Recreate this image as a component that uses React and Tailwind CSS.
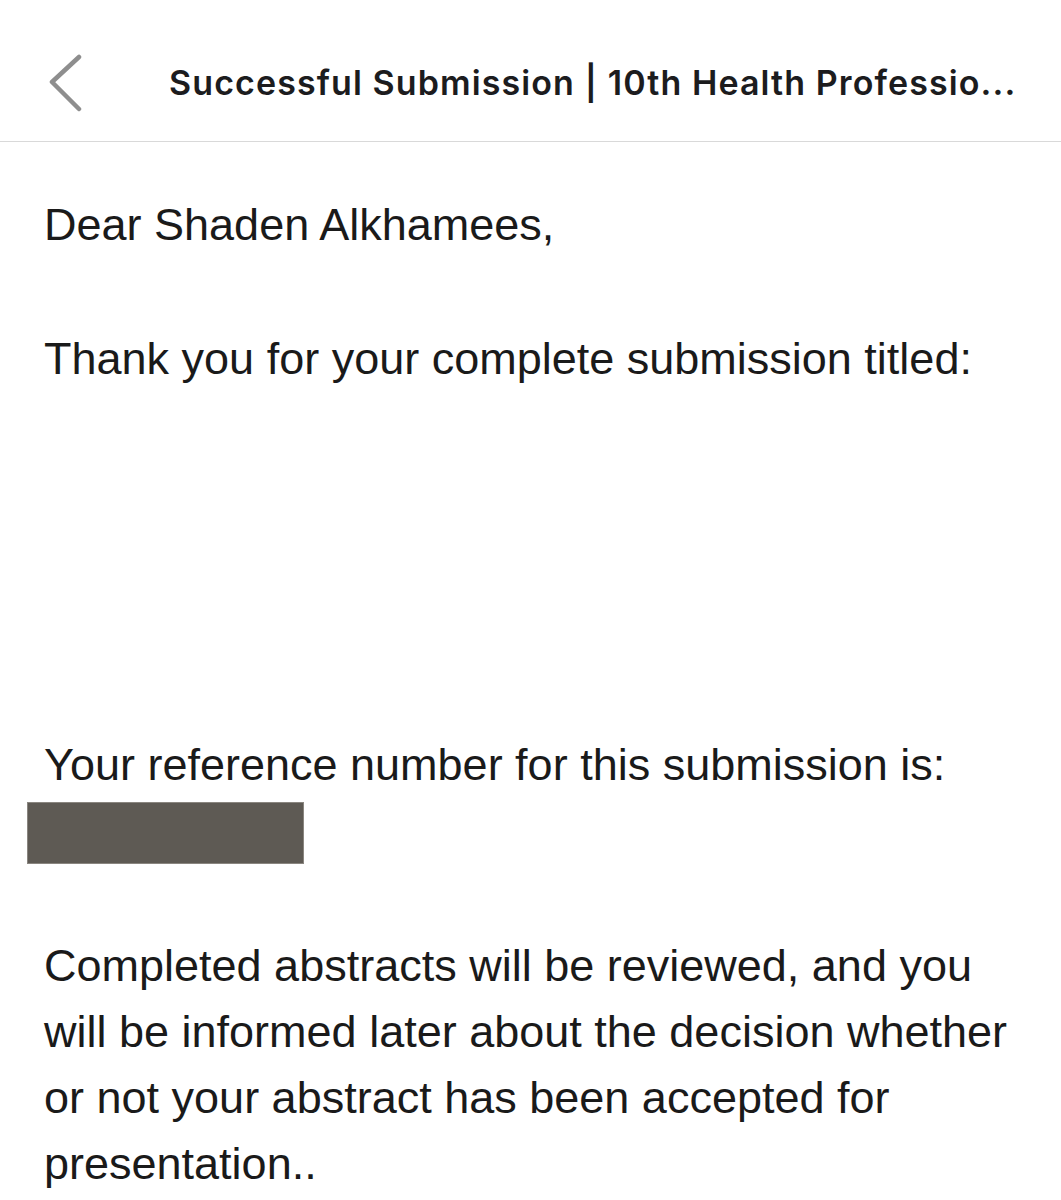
export default function App() {
  return (
    <div className="min-h-[1200px] w-[1061px] bg-white overflow-hidden">
      {/* header */}
      <div className="h-[142px] border-b border-[#d9d9d9] flex items-center pt-[24px]">
        <div className="w-[169px] shrink-0 pl-[48px] flex items-center">
          <svg width="36" height="58" viewBox="0 0 36 58" fill="none">
            <polyline
              points="31,3 4,28 31,55"
              stroke="#8e8e8e"
              strokeWidth="4.5"
              strokeLinecap="round"
              strokeLinejoin="round"
            />
          </svg>
        </div>
        <h1
          className="text-[34px] font-semibold text-[#1c1c1e] whitespace-nowrap tracking-[1.1px]"
          style={{ fontFamily: "Inter, 'Noto Sans', sans-serif" }}
        >
          Successful Submission | 10th Health Professio...
        </h1>
      </div>

      {/* body */}
      <div
        className="pl-[44px] pr-[40px] text-[45px] leading-[66px] text-[#1a1a1a]"
        style={{ fontFamily: "'Liberation Sans', Arial, sans-serif" }}
      >
        <p className="mt-[50px]">Dear Shaden Alkhamees,</p>
        <p className="mt-[68px]">Thank you for your complete submission titled:</p>
        <p className="mt-[340px]">Your reference number for this submission is:</p>
        <div className="-ml-[17px] mt-[4px] w-[277px] h-[62px] bg-[#5e5a54] border border-[#8a8680]"></div>
        <p className="mt-[69px]">
          Completed abstracts will be reviewed, and you will be informed later
          about the decision whether or not your abstract has been accepted for
          presentation..
        </p>
      </div>
    </div>
  );
}
